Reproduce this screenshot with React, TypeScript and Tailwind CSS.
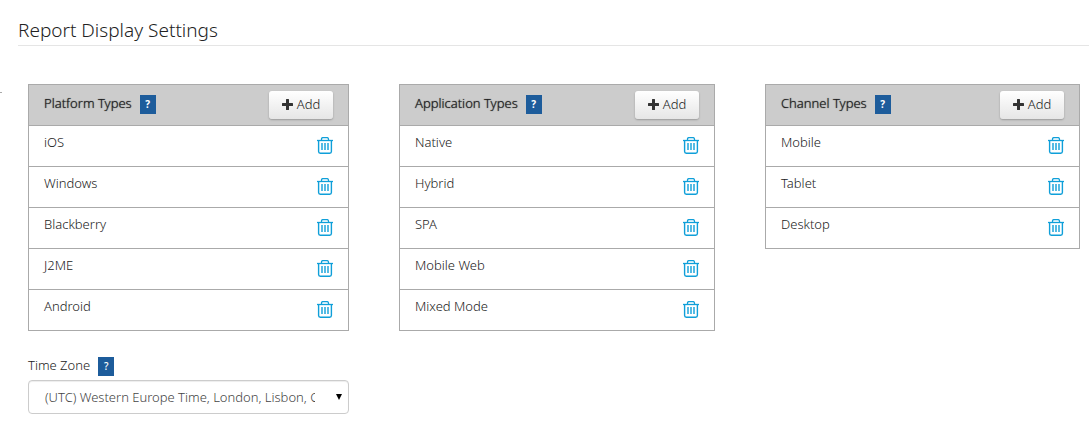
import { useState } from "react";

const groups = [
  { title: "Platform Types", items: ["iOS", "Windows", "Blackberry", "J2ME", "Android"] },
  { title: "Application Types", items: ["Native", "Hybrid", "SPA", "Mobile Web", "Mixed Mode"] },
  { title: "Channel Types", items: ["Mobile", "Tablet", "Desktop"] },
];

function TrashIcon() {
  return (
    <svg width="16" height="17" viewBox="0 0 16 17" fill="none" stroke="#0f9fd9" aria-hidden="true">
      <path d="M0 3.5h16" strokeWidth="1.3" />
      <path d="M4.5 3V2.2Q4.5 .6 6 .6h4q1.5 0 1.5 1.6V3" strokeWidth="1.3" />
      <path d="M1.6 4v10.6q0 1.7 1.7 1.7h9.4q1.7 0 1.7-1.7V4" strokeWidth="1.4" />
      <path d="M5 6v7M8 6v7M11 6v7" strokeWidth="1.4" />
    </svg>
  );
}

function PlusIcon() {
  return (
    <svg width="11" height="11" viewBox="0 0 11 11" fill="#333" aria-hidden="true">
      <path d="M4 .6q0-.6.6-.6h1.8q.6 0 .6.6V4h3.4q.6 0 .6.6v1.8q0 .6-.6.6H7v3.4q0 .6-.6.6H4.6q-.6 0-.6-.6V7H.6Q0 7 0 6.4V4.6Q0 4 .6 4H4z" />
    </svg>
  );
}

function Help({ topic, bold }: { topic: string; bold?: boolean }) {
  return (
    <button
      type="button"
      aria-label={`Help: ${topic}`}
      className={`flex h-[19px] w-4 items-center justify-center bg-[#1d5c9b] text-[10px] leading-none text-white ${bold ? "font-bold" : "font-medium"}`}
    >
      ?
    </button>
  );
}

function TypeTable({ title, items }: { title: string; items: string[] }) {
  return (
    <table className="w-full border-collapse border border-[#aaa]">
      <thead>
        <tr className="h-[41px] border border-[#aaa] bg-[#ccc]">
          <th scope="col" className="p-0 pb-0.5 pl-[15px] text-left font-light">
            <div className="flex items-center gap-2">
              <span className="pb-0.5 [text-shadow:0_0_1px_#333]">{title}</span>
              <Help topic={title} bold />
            </div>
          </th>
          <th scope="col" className="p-0 pr-[15px] font-light">
            <button
              type="button"
              className="ml-auto flex h-7 w-16 items-center justify-center gap-1 rounded-[3px] bg-linear-to-b from-white to-[#e6e6e6] pb-0.5 shadow-[0_1px_2px_rgba(0,0,0,0.25)]"
            >
              <PlusIcon />
              Add
            </button>
          </th>
        </tr>
      </thead>
      <tbody>
        {items.map((item) => (
          <tr key={item} className="h-[41px] border border-[#aaa]">
            <td className="p-0 pb-2 pl-[15px]">{item}</td>
            <td className="p-0 pr-[15px] pb-0.5">
              <button type="button" aria-label={`Delete ${item}`} className="ml-auto block">
                <TrashIcon />
              </button>
            </td>
          </tr>
        ))}
      </tbody>
    </table>
  );
}

export default function App() {
  const [zone, setZone] = useState("utc");
  return (
    <main className="bg-white pt-[17px] font-['Noto_Sans',sans-serif] text-[13px] leading-5 font-light text-[#222]">
      <h1 className="ml-[18px] border-b border-[#e5e5e5] pb-px text-[19px] leading-[27px] font-light">
        Report Display Settings
      </h1>
      <div className="flex pt-[38px]">
        <div className="mt-2 h-px w-0.5 shrink-0 bg-[#aaa]" />
        <div className="grid grow grid-cols-[321fr_316fr_315fr] items-start gap-x-[50px] pr-[9px] pl-[26px]">
          {groups.map((group) => (
            <TypeTable key={group.title} {...group} />
          ))}
          <div className="pt-6">
            <div className="flex items-center gap-2">
              <label htmlFor="time-zone" className="pb-0.5">
                Time Zone
              </label>
              <Help topic="Time Zone" />
            </div>
            <div className="relative mt-[3px]">
              <select
                id="time-zone"
                value={zone}
                onChange={(e) => setZone(e.target.value)}
                className="h-[34px] w-full appearance-none rounded border border-[#ccc] bg-white pr-[33px] pl-4 text-[#444] shadow-[inset_0_1px_1px_rgba(0,0,0,0.075)]"
              >
                <option value="utc">(UTC) Western Europe Time, London, Lisbon, Casablanca</option>
              </select>
              <svg
                className="pointer-events-none absolute top-[14px] right-[7px]"
                width="6"
                height="6"
                viewBox="0 0 6 6"
                aria-hidden="true"
              >
                <path d="M0 0h6L3 6z" fill="#000" />
              </svg>
            </div>
          </div>
        </div>
      </div>
    </main>
  );
}
